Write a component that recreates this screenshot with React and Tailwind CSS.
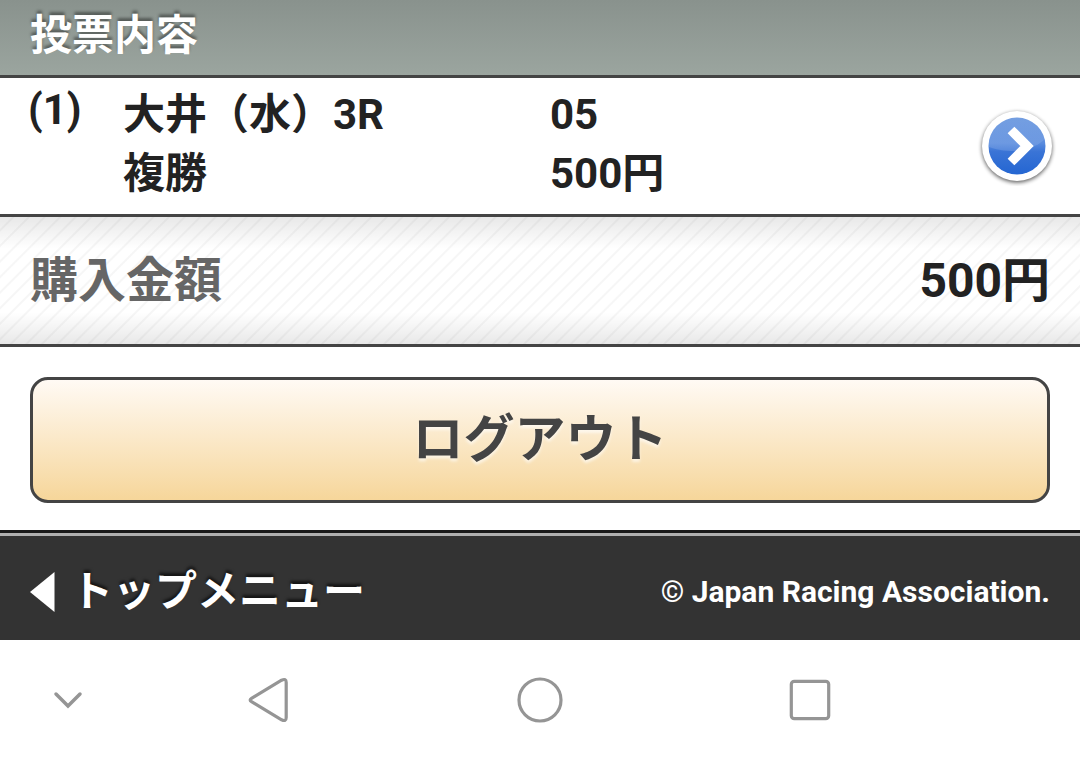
import { useId } from 'react';

const BETS = [
  { no: 1, race: '大井（水）3R', type: '複勝', horse: '05', amount: '500円' },
];

function ArrowBadge() {
  const id = useId();
  return (
    <svg viewBox="0 0 80 80" className="size-20 shrink-0" aria-hidden="true">
      <defs>
        <linearGradient id={`${id}base`} x1="0" y1="0" x2="0" y2="1">
          <stop offset="0" stopColor="#6f9be0" />
          <stop offset="0.45" stopColor="#5a8cde" />
          <stop offset="0.6" stopColor="#3a74d6" />
          <stop offset="1" stopColor="#2466d2" />
        </linearGradient>
        <linearGradient id={`${id}shine`} x1="0" y1="0" x2="0" y2="1">
          <stop offset="0" stopColor="#fff" stopOpacity="0" />
          <stop offset="1" stopColor="#fff" stopOpacity="0.14" />
        </linearGradient>
        <clipPath id={`${id}clip`}>
          <circle cx="40" cy="40" r="28.5" />
        </clipPath>
        <filter id={`${id}blur`} x="-20%" y="-20%" width="140%" height="140%">
          <feGaussianBlur stdDeviation="2" />
        </filter>
      </defs>
      <circle cx="40" cy="41.5" r="35" fill="#000" opacity="0.65" filter={`url(#${id}blur)`} />
      <circle cx="40" cy="40" r="35" fill="#fff" />
      <circle cx="40" cy="40" r="28.5" fill={`url(#${id}base)`} />
      <ellipse cx="34" cy="23" rx="38" ry="22" fill={`url(#${id}shine)`} clipPath={`url(#${id}clip)`} />
      <path d="M34 24 L50 40 L34 56" fill="none" stroke="#fff" strokeWidth="9.5" />
    </svg>
  );
}

function BetRow({ bet }) {
  return (
    <li className="border-b-[3px] border-[#444]">
      <a href="#detail" className="flex items-center pt-[7px] pb-[11px] pl-7 pr-[23px] text-[42px] leading-[59px]">
        <span className="w-[95px] shrink-0 self-start leading-[49px]">({bet.no})</span>
        <span className="flex-1">
          <span className="block">{bet.race}</span>
          <span className="block">{bet.type}</span>
        </span>
        <span className="flex-1">
          <span className="block">{bet.horse}</span>
          <span className="block">{bet.amount}</span>
        </span>
        <span className="pt-1">
          <ArrowBadge />
        </span>
      </a>
    </li>
  );
}

function SystemNav() {
  const button = 'flex items-center justify-center';
  return (
    <nav className="grid grid-cols-[1fr_2fr_2fr_2fr_1fr] py-9 text-[#959595]">
      <button type="button" aria-label="閉じる" className={button}>
        <svg viewBox="0 0 48 48" className="size-12" fill="none" stroke="currentColor" strokeWidth="3.5" strokeLinecap="round">
          <path d="M12 18 L24 30 L36 18" />
        </svg>
      </button>
      <button type="button" aria-label="戻る" className={button}>
        <svg viewBox="0 0 48 48" className="size-12" fill="none" stroke="currentColor" strokeWidth="3.2" strokeLinejoin="round">
          <path d="M5.5 22.3 L35.6 4.2 Q40.2 2 40.2 6.5 V41.5 Q40.2 46 35.6 43.8 L5.5 25.7 Q2.8 24 5.5 22.3 Z" />
        </svg>
      </button>
      <button type="button" aria-label="ホーム" className={button}>
        <svg viewBox="0 0 48 48" className="size-12" fill="none" stroke="currentColor" strokeWidth="3.2">
          <circle cx="24" cy="24" r="21" />
        </svg>
      </button>
      <button type="button" aria-label="履歴" className={button}>
        <svg viewBox="0 0 48 48" className="size-12" fill="none" stroke="currentColor" strokeWidth="3.2">
          <rect x="5.3" y="5.3" width="37.4" height="37.4" rx="3" />
        </svg>
      </button>
    </nav>
  );
}

export default function App() {
  return (
    <div className="min-h-screen bg-white font-bold text-[#222] font-[Roboto,'Noto_Sans_CJK_JP',sans-serif]">
      <header className="border-b-[3px] border-[#444] bg-linear-to-b from-[#89928d] to-[#9ba59f] px-[30px] pb-[3px]">
        <h1 className="text-[42px] leading-[72px] text-white [text-shadow:0_-3px_3px_rgba(0,0,0,0.4)]">投票内容</h1>
      </header>

      <main>
        <ul>
          {BETS.map((bet) => (
            <BetRow key={bet.no} bet={bet} />
          ))}
        </ul>

        <dl className="flex items-center justify-between border-b-[3px] border-[#444] bg-[linear-gradient(to_bottom,rgba(0,0,0,0.09),transparent_25%,transparent_75%,rgba(0,0,0,0.09)),repeating-linear-gradient(135deg,#fff_0px,#fff_8px,#f6f6f6_9px,#f6f6f6_10px,#fff_11px)] px-[30px] text-5xl leading-[127px]">
          <dt className="text-[#666]">購入金額</dt>
          <dd>500円</dd>
        </dl>

        <div className="px-[30px] pt-[30px] pb-[27px]">
          <button
            type="button"
            className="block w-full rounded-[18px] border-[3px] border-[#444] bg-linear-to-b from-[#fffaf4] to-[#f6d69a] text-[51px] leading-[120px] text-[#444] [text-shadow:0_3px_3px_rgba(255,255,255,0.6)]"
          >
            ログアウト
          </button>
        </div>
      </main>

      <footer className="border-t-[3px] border-[#1a1a1a] text-white">
        <div className="flex items-center justify-between border-t-[3px] border-[#b0b0b0] bg-[#333] px-[30px] pt-2 leading-[96px]">
          <a href="#top" className="flex items-center gap-4 text-[42px] [text-shadow:0_-3px_3px_rgba(0,0,0,0.6)]">
            <svg viewBox="0 0 25 40" className="h-10 w-[25px] shrink-0" fill="currentColor" aria-hidden="true">
              <path d="M0 20 L24.5 0 V40 Z" />
            </svg>
            トップメニュー
          </a>
          <small className="text-[30px]">© Japan Racing Association.</small>
        </div>
      </footer>

      <SystemNav />
    </div>
  );
}
